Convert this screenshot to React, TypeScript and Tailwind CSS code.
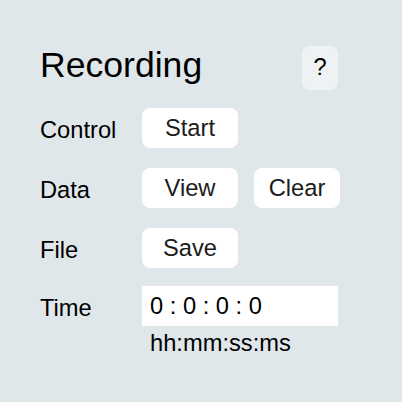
import React from "react";

const Btn = ({ label, w = "w-24" }: { label: string; w?: string }) => (
  <button
    className={`${w} h-10 rounded-lg bg-white text-[23.7px] leading-10 text-[#1c1c1c] text-center`}
  >
    {label}
  </button>
);

const Label = ({ children }: { children: React.ReactNode }) => (
  <span className="w-[102px] pt-1 text-[23.7px] leading-7">{children}</span>
);

export default function App() {
  return (
    <div
      className="w-[402px] h-[402px] bg-[#e0e7eb] pl-10 pt-[45px] text-black"
      style={{ fontFamily: '"Liberation Sans", Arial, sans-serif' }}
    >
      <div className="flex items-start justify-between w-[298px]">
        <h1 className="text-[35.6px] leading-10 font-normal">Recording</h1>
        <button className="mt-px w-9 h-11 rounded-lg bg-[#eef2f5] text-[23.7px] leading-none">
          ?
        </button>
      </div>
      <div className="mt-[18px] flex flex-col">
        <div className="flex items-center h-10">
          <Label>Control</Label>
          <Btn label="Start" />
        </div>
        <div className="flex items-center h-10 mt-5">
          <Label>Data</Label>
          <Btn label="View" />
          <div className="w-4" />
          <Btn label="Clear" w="w-[86px]" />
        </div>
        <div className="flex items-center h-10 mt-5">
          <Label>File</Label>
          <Btn label="Save" />
        </div>
        <div className="flex items-center h-10 mt-[18px]">
          <Label>Time</Label>
          <div className="w-[196px] h-10 bg-white pl-2 text-[23.7px] leading-10">
            0 : 0 : 0 : 0
          </div>
        </div>
        <div className="pl-[110px] mt-[3px] text-[23.7px] leading-[28px]">
          hh:mm:ss:ms
        </div>
      </div>
    </div>
  );
}
